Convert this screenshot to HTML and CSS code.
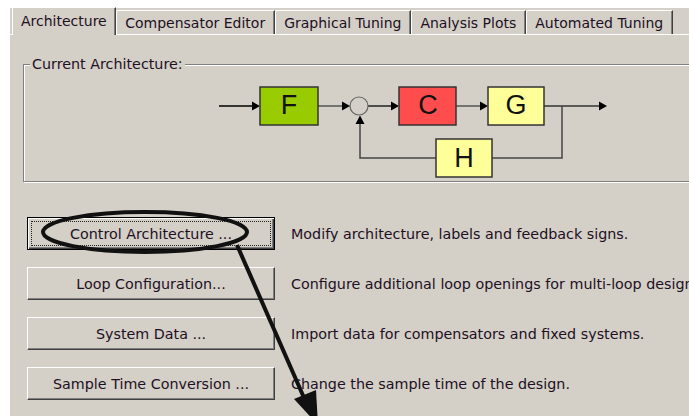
FILE: index.html
```html
<!DOCTYPE html>
<html lang="en">
<head>
    <meta charset="UTF-8">
    <title>Architecture</title>
    <link rel="stylesheet" href="styles.css">
</head>
<body>
<div id="window">
    <div id="tabs">
        <div class="tab active">Architecture</div>
        <div class="tab">Compensator Editor</div>
        <div class="tab">Graphical Tuning</div>
        <div class="tab">Analysis Plots</div>
        <div class="tab">Automated Tuning</div>
    </div>
    <div id="panel">
        <div class="group">
            <div class="group-title">Current Architecture:</div>
            <svg class="diagram" width="680" height="108" viewBox="24 73 680 108">
                <g stroke-width="1.5" fill="none">
                    <line x1="219" y1="106" x2="253" y2="106" stroke="#000"/>
                    <line x1="318" y1="106" x2="343" y2="106" stroke="#555"/>
                    <line x1="368" y1="106" x2="392" y2="106" stroke="#222"/>
                    <line x1="456" y1="106" x2="481" y2="106" stroke="#555"/>
                    <line x1="544" y1="106" x2="600" y2="106" stroke="#333"/>
                    <polyline points="562,106 562,158 492,158" stroke="#444"/>
                    <polyline points="436,158 360,158 360,123" stroke="#444"/>
                    <circle cx="359" cy="106" r="9" stroke="#666" stroke-width="1.2"/>
                </g>
                <g fill="#000">
                    <polygon points="252,101.5 260,106 252,110.5"/>
                    <polygon points="342,101.5 350,106 342,110.5"/>
                    <polygon points="391,101.5 399,106 391,110.5"/>
                    <polygon points="480,101.5 488,106 480,110.5"/>
                    <polygon points="599,101.5 607,106 599,110.5"/>
                    <polygon points="355.5,124 360,115.5 364.5,124"/>
                </g>
                <g stroke="#333" stroke-width="1.5">
                    <rect x="260" y="87" width="58" height="38" fill="#99cc00"/>
                    <rect x="399" y="87" width="57" height="38" fill="#ff4d4d"/>
                    <rect x="488" y="87" width="56" height="38" fill="#ffff99"/>
                    <rect x="436" y="139" width="56" height="38" fill="#ffff99"/>
                </g>
                <g class="block-label" text-anchor="middle">
                    <text x="289" y="114">F</text>
                    <text x="428" y="114">C</text>
                    <text x="516" y="114">G</text>
                    <text x="464" y="167">H</text>
                </g>
            </svg>
        </div>
        <ul class="actions">
            <li><button class="btn default"><span>Control Architecture ...</span></button><span class="desc">Modify architecture, labels and feedback signs.</span></li>
            <li><button class="btn"><span>Loop Configuration...</span></button><span class="desc">Configure additional loop openings for multi-loop design.</span></li>
            <li><button class="btn"><span>System Data ...</span></button><span class="desc">Import data for compensators and fixed systems.</span></li>
            <li><button class="btn"><span>Sample Time Conversion ...</span></button><span class="desc">Change the sample time of the design.</span></li>
        </ul>
    </div>
    <svg class="annotation" width="689" height="416" viewBox="0 0 689 416">
        <ellipse cx="145" cy="232" rx="102" ry="20" fill="none" stroke="#111" stroke-width="4"/>
        <line x1="237" y1="245" x2="305" y2="400" stroke="#111" stroke-width="4"/>
        <polygon points="294,399 316,390 318,425" fill="#111"/>
    </svg>
</div>
</body>
</html>
```

FILE: styles.css
```css
*{
    margin: 0;
    padding: 0;
}
ul{
    list-style: none;
}
body{
    background: #fff;
    font-family: "DejaVu Sans", Verdana, sans-serif;
    font-size: 14.3px;
    color: #1e0f23;
}
#window{
    position: relative;
    width: 689px;
    height: 416px;
    overflow: hidden;
    padding: 8px 0 0 10px;
    box-sizing: border-box;
}
#tabs{
    display: flex;
    align-items: flex-end;
    height: 26px;
    padding-left: 2px;
    background: #d4d0c8;
}
.tab{
    position: relative;
    height: 24px;
    line-height: 25px;
    padding: 0 8.5px;
    box-sizing: border-box;
    font-size: 14px;
    border-top: 1px solid #fff;
    border-left: 1px solid #fff;
    border-right: 1px solid #404040;
    border-radius: 2px 0 0 0;
    box-shadow: inset -1px 0 #808080;
    background: #d4d0c8;
    white-space: nowrap;
}
.tab.active{
    height: 28px;
    line-height: 27px;
    padding: 0 8px;
    margin-bottom: -1px;
    z-index: 1;
}
#panel{
    height: 382px;
    background: #d4d0c8;
    border-top: 1px solid #fff;
}
.group{
    width: 700px;
    height: 118px;
    margin: 29px 0 0 13px;
    box-sizing: border-box;
    border: 1px solid #808080;
    box-shadow: inset 1px 1px #fff, 1px 1px #fff;
}
.group-title{
    width: fit-content;
    margin: -10px 0 0 6px;
    padding: 0 2px;
    line-height: 19px;
    background: #d4d0c8;
}
.diagram{
    display: block;
    margin-top: -1px;
}
.block-label{
    font-family: "Liberation Sans", Arial, sans-serif;
    font-size: 27px;
    fill: #111;
}
.actions{
    display: flex;
    flex-direction: column;
    gap: 17px;
    margin: 35px 0 0 17px;
}
.actions li{
    display: flex;
    align-items: center;
    gap: 16px;
    height: 33px;
}
.btn{
    position: relative;
    width: 248px;
    height: 33px;
    flex: none;
    font: inherit;
    color: inherit;
    background: #d4d0c8;
    border: 1px solid;
    border-color: #fff #404040 #404040 #fff;
    box-shadow: inset -1px -1px #808080;
}
.btn.default{
    border-color: #000;
    box-shadow: inset 1px 1px #fff, inset -1px -1px #404040, inset -2px -2px #808080;
}
.btn.default::after{
    content: "";
    position: absolute;
    left: 3px;
    top: 3px;
    right: 3px;
    bottom: 3px;
    border: 1px dotted #222;
}
.desc{
    white-space: nowrap;
}
.annotation{
    position: absolute;
    left: 0;
    top: 0;
    pointer-events: none;
}
```
